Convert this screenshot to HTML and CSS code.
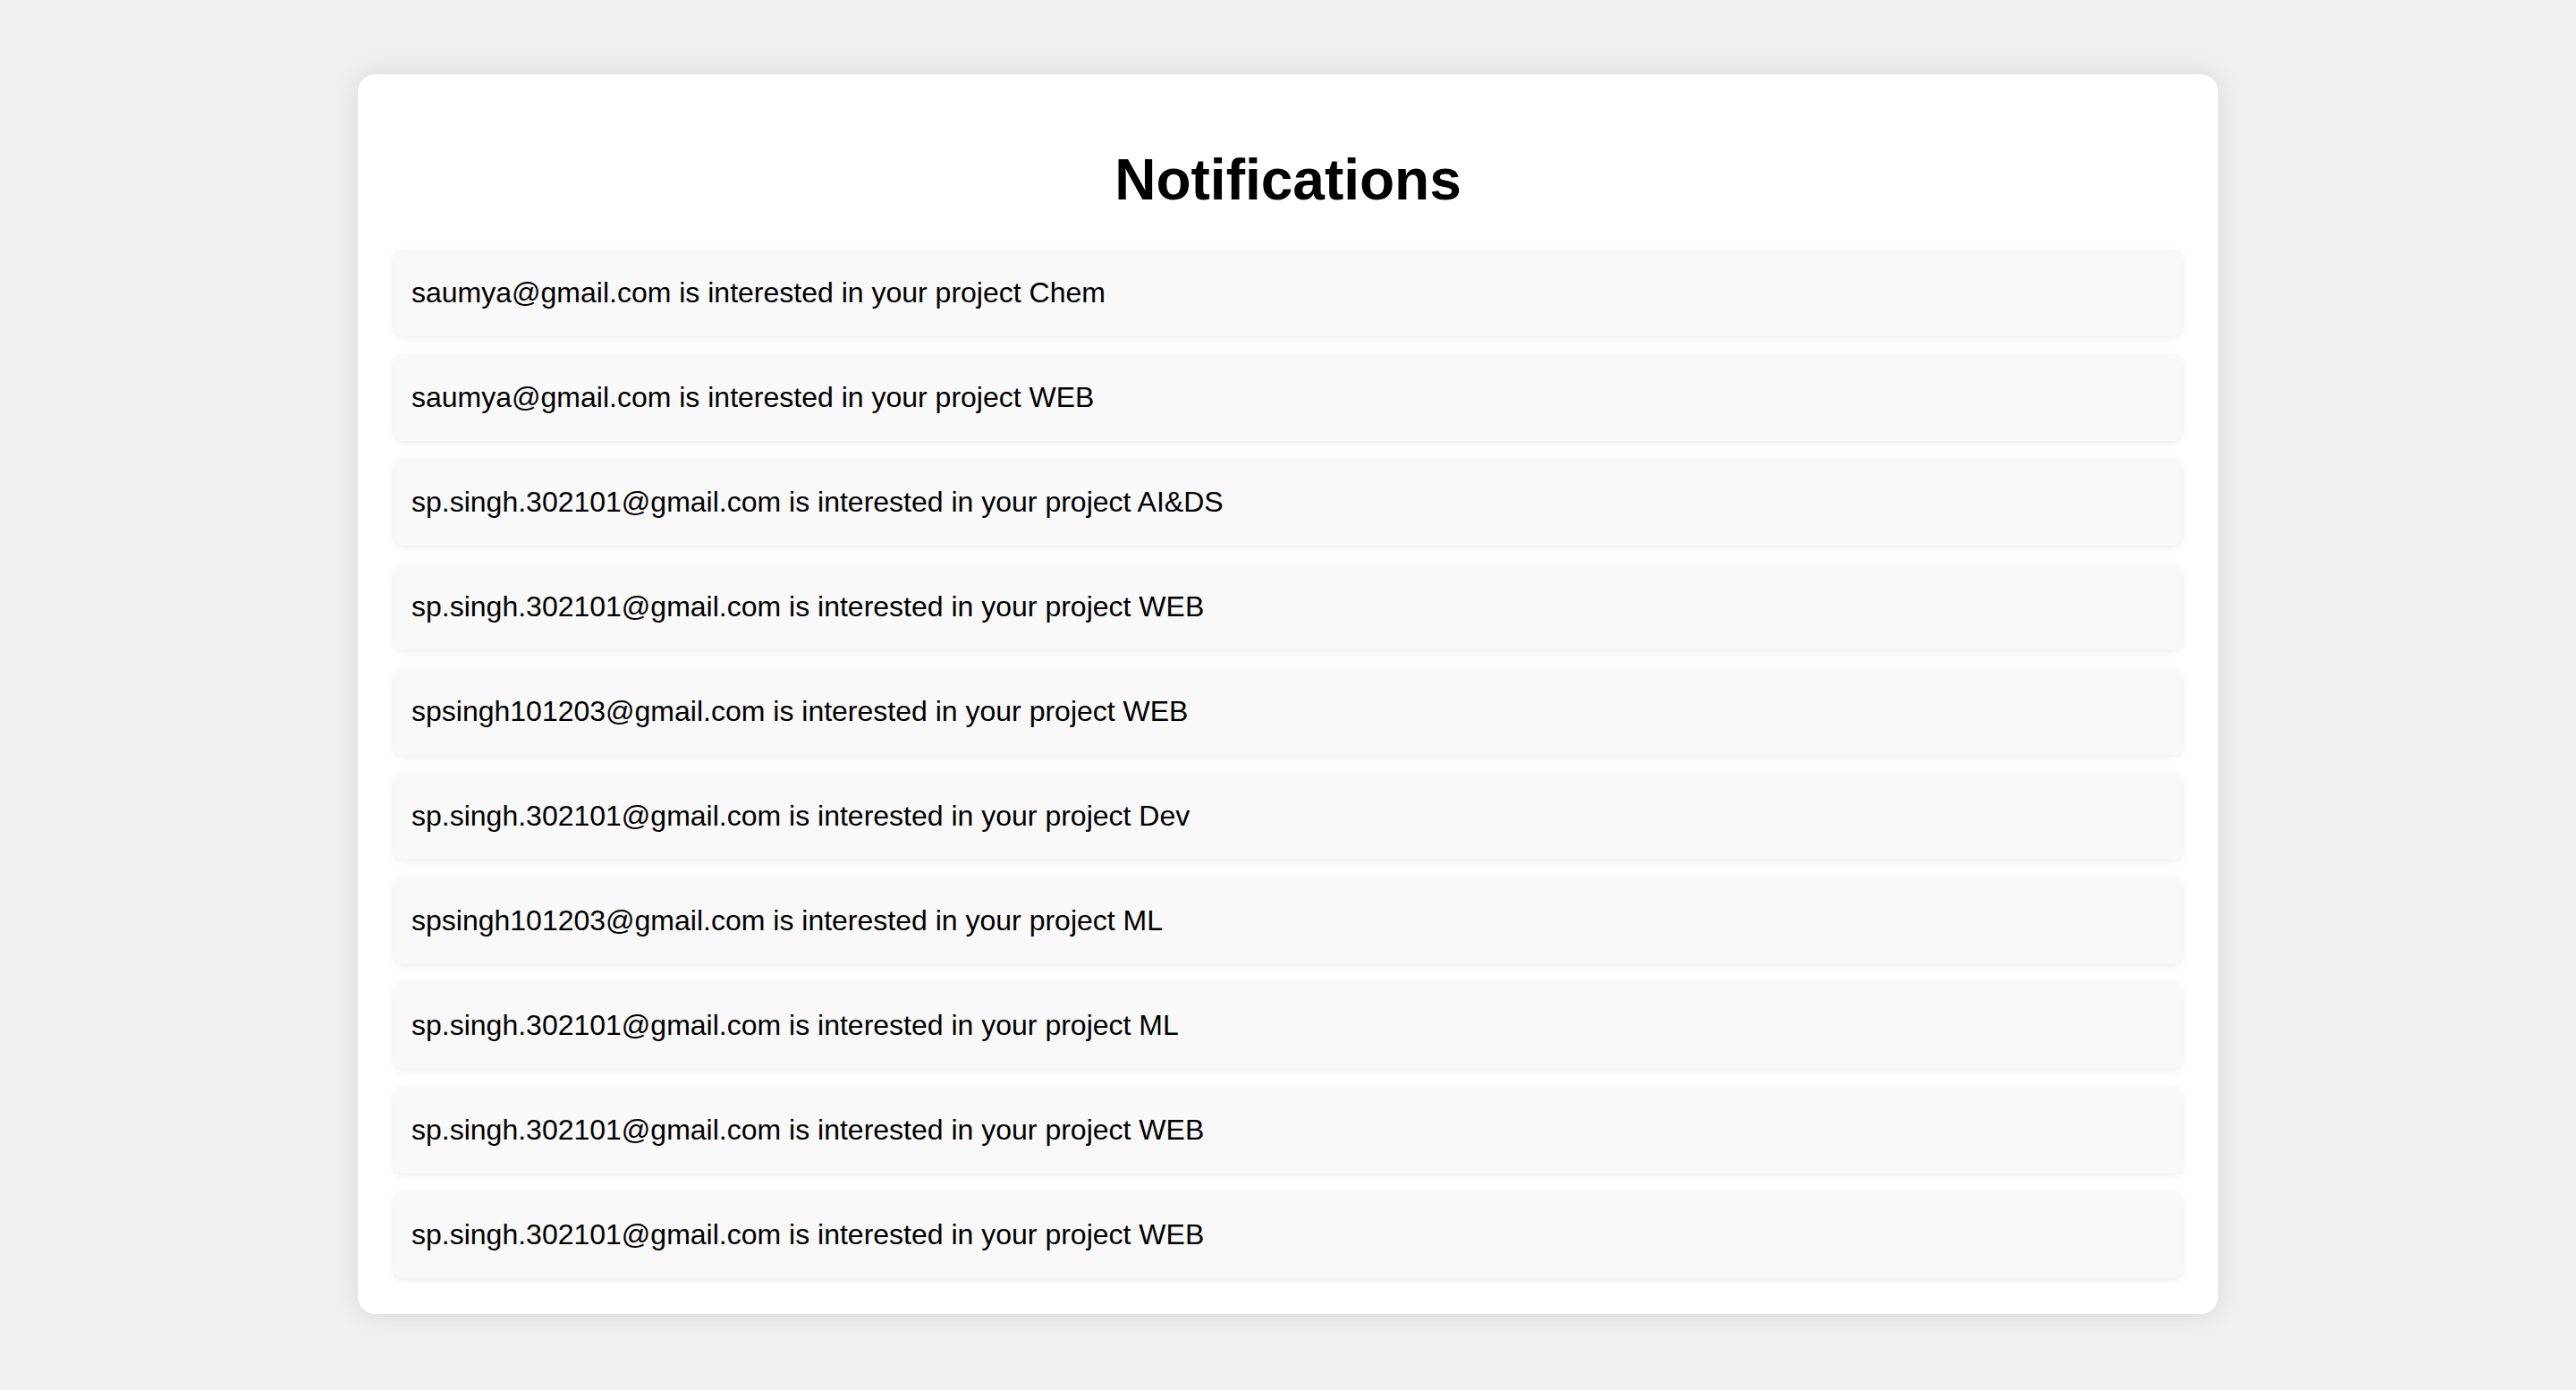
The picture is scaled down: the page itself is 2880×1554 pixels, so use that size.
FILE: index.html
```html
<!DOCTYPE html>
<html lang="en">
<head>
<meta charset="utf-8">
<title>Notifications</title>
<link rel="stylesheet" href="styles.css">
</head>
<body>
<div class="container">
  <h1 class="title">Notifications</h1>
  <ul class="list">
    <li class="item">saumya@gmail.com is interested in your project Chem</li>
    <li class="item">saumya@gmail.com is interested in your project WEB</li>
    <li class="item">sp.singh.302101@gmail.com is interested in your project AI&amp;DS</li>
    <li class="item">sp.singh.302101@gmail.com is interested in your project WEB</li>
    <li class="item">spsingh101203@gmail.com is interested in your project WEB</li>
    <li class="item">sp.singh.302101@gmail.com is interested in your project Dev</li>
    <li class="item">spsingh101203@gmail.com is interested in your project ML</li>
    <li class="item">sp.singh.302101@gmail.com is interested in your project ML</li>
    <li class="item">sp.singh.302101@gmail.com is interested in your project WEB</li>
    <li class="item">sp.singh.302101@gmail.com is interested in your project WEB</li>
  </ul>
</div>
</body>
</html>
```
FILE: styles.css
```css
html, body {
  margin: 0;
  padding: 0;
}
body {
  background: #f0f0f0;
  font-family: "Liberation Sans", Arial, sans-serif;
  color: #000;
  padding-top: 83px;
  padding-bottom: 85px;
}
.container {
  box-sizing: border-box;
  width: 2080px;
  margin: 0 auto;
  background: #fff;
  border-radius: 20px;
  padding: 40px;
  box-shadow: 0 0 30px rgba(0, 0, 0, 0.1);
}
.title {
  margin: 41px 0 41px;
  font-size: 64px;
  line-height: 74px;
  font-weight: bold;
  text-align: center;
}
.list {
  list-style: none;
  margin: 0;
  padding: 0;
  display: flex;
  flex-direction: column;
  gap: 20px;
}
.item {
  background: #f9f9f9;
  border-radius: 10px;
  padding: 30px 20px;
  font-size: 32px;
  line-height: 37px;
  box-shadow: 0 2px 10px rgba(0, 0, 0, 0.07);
}
```
